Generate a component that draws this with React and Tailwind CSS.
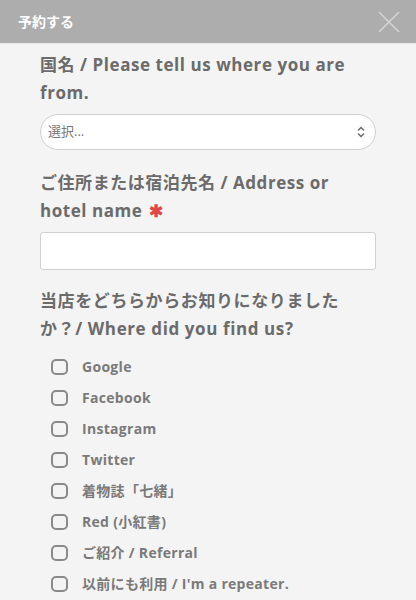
import React from "react";

const font = { fontFamily: '"Open Sans", "Noto Sans CJK JP", sans-serif' };

function Checkbox({ label }) {
  return (
    <label className="flex items-center h-[31px] pl-[11px]">
      <span className="w-[17px] h-[16px] rounded-[5px] border-2 border-[#8a8a8a] bg-transparent shrink-0"></span>
      <span className="ml-[14px] text-[14px] font-bold tracking-[0.3px] text-[#7a7a7a] leading-none">{label}</span>
    </label>
  );
}

export default function App() {
  const options = [
    "Google",
    "Facebook",
    "Instagram",
    "Twitter",
    "着物誌「七緒」",
    "Red (小紅書)",
    "ご紹介 / Referral",
    "以前にも利用 / I'm a repeater.",
  ];
  return (
    <div className="w-[416px] h-[600px] overflow-hidden bg-[#f4f4f4] flex flex-col" style={font}>
      <div className="h-[43px] bg-[#adadad] flex items-center justify-between pl-[18px] pr-[15px] shrink-0">
        <span className="text-white text-[14px] font-bold">予約する</span>
        <svg width="24" height="24" viewBox="0 0 24 24" className="text-[#d4d4d4]">
          <path d="M2 2 L22 22 M22 2 L2 22" stroke="currentColor" strokeWidth="1.6" fill="none" />
        </svg>
      </div>
      <div className="h-px bg-[#e6e6e6] shrink-0"></div>
      <div className="px-10 pt-[7px] flex flex-col">
        <div className="text-[17px] font-bold tracking-[0.55px] text-[#6b6b6b] leading-[28px]">
          国名 / Please tell us where you are from.
        </div>
        <div className="mt-[7px] h-[36px] rounded-full border border-[#d0d0d0] bg-white flex items-center justify-between pl-[7px] pr-[9px]">
          <span className="text-[13px] text-[#777]">選択...</span>
          <svg width="10" height="12" viewBox="0 0 10 12">
            <path d="M2 4.5 L5 1.5 L8 4.5 M2 7.5 L5 10.5 L8 7.5" stroke="#666" strokeWidth="1.4" fill="none" />
          </svg>
        </div>
        <div className="mt-[19px] text-[17px] font-bold tracking-[0.55px] text-[#6b6b6b] leading-[28px]">
          ご住所または宿泊先名 / Address or hotel name <span className="text-[#e04848] ml-[2px]">✱</span>
        </div>
        <div className="mt-[7px] h-[38px] rounded-[3px] border border-[#d0d0d0] bg-white"></div>
        <div className="mt-[17px] text-[17px] font-bold tracking-[0.6px] text-[#6b6b6b] leading-[28px]">
          当店をどちらからお知りになりましたか？/ Where did you find us?
        </div>
        <div className="mt-[8px] flex flex-col">
          {options.map((o) => (
            <Checkbox key={o} label={o} />
          ))}
        </div>
      </div>
    </div>
  );
}
